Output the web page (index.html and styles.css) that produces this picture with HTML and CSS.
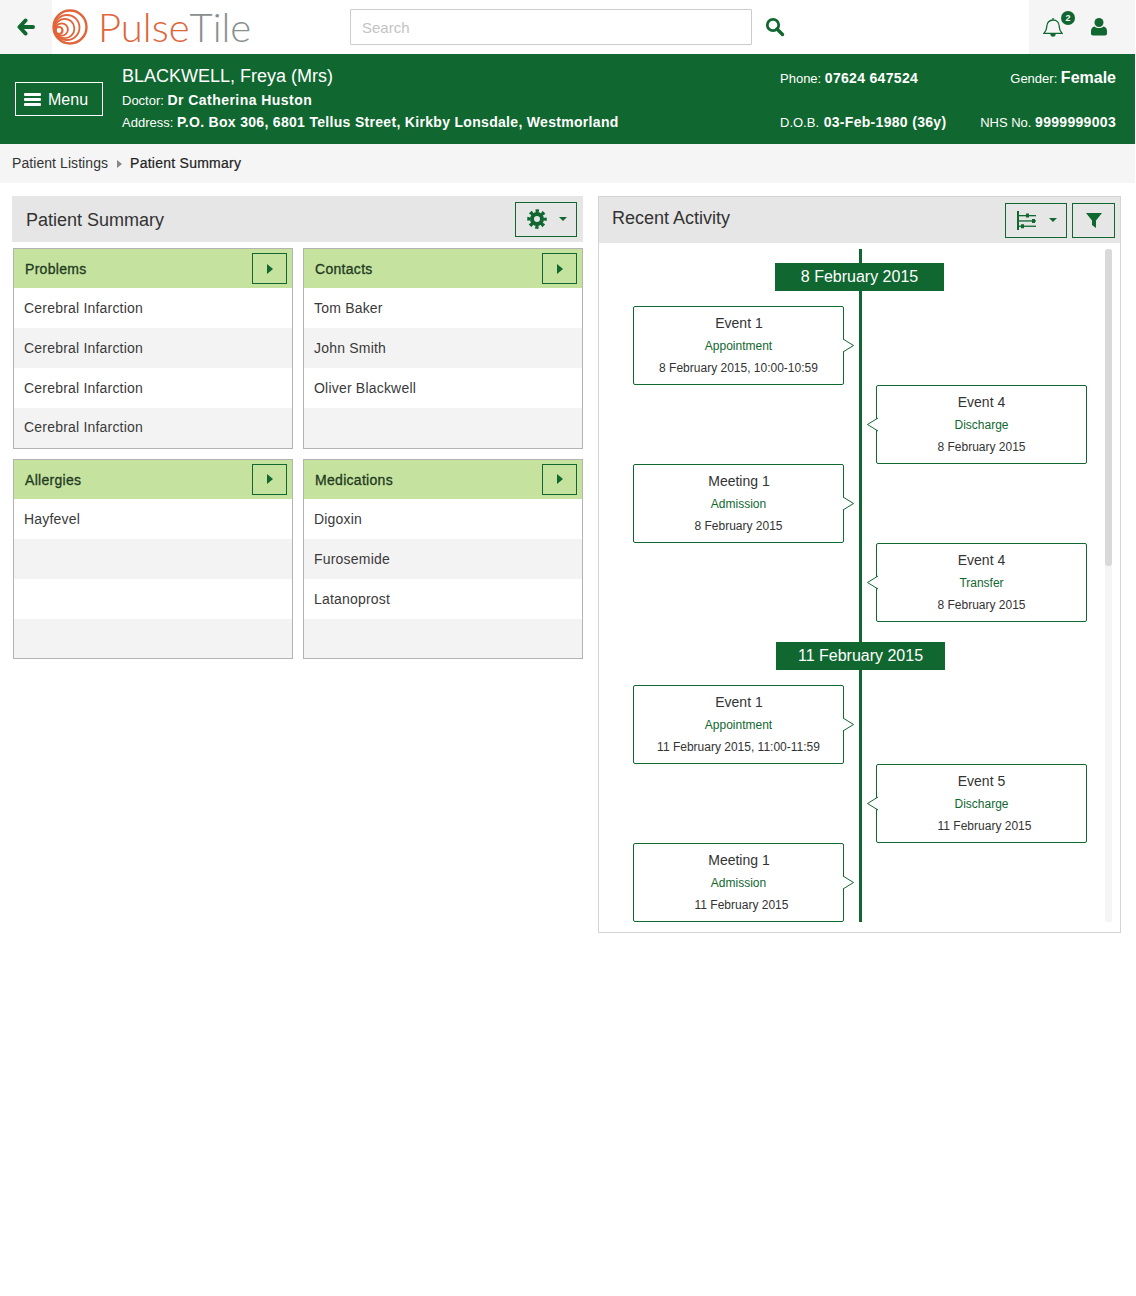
FILE: index.html
```html
<!DOCTYPE html>
<html lang="en">

<head>
    <meta charset="UTF-8">
    <meta name="viewport" content="width=device-width, initial-scale=1.0">
    <title>PulseTile - Patient Summary</title>
    <link rel="stylesheet" href="styles.css">
</head>

<body>
    <header class="topbar">
        <a class="back">
            <svg width="18" height="18" viewBox="0 0 18 18"><path d="M8.500 2.500 2.500 9l6 6.500M3.500 9H16" fill="none" stroke="#10672f" stroke-width="4" stroke-linejoin="round" stroke-linecap="round"/></svg>
        </a>
        <div class="logo">
            <svg width="36" height="36" viewBox="0 0 36 36" fill="none" stroke="#e0653a" stroke-width="1.800">
                <circle cx="18" cy="18" r="16.500" stroke-width="2.400"/>
                <circle cx="15" cy="18.500" r="12.500"/>
                <circle cx="12.700" cy="19.500" r="9.700"/>
                <circle cx="9.700" cy="20.500" r="6.200"/>
                <circle cx="7" cy="21.500" r="3.500" stroke-width="2.200"/>
            </svg>
            <span class="logo-pulse">Pulse</span><span class="logo-tile">Tile</span>
        </div>
        <div class="search">
            <input type="text" placeholder="Search">
            <svg width="20" height="20" viewBox="0 0 20 20" fill="none" stroke="#10672f"><circle cx="8" cy="8" r="5.700" stroke-width="2.800"/><path d="M12 12l5.500 5.500" stroke-width="3.400" stroke-linecap="round"/></svg>
        </div>
        <div class="user-tools">
            <div class="bell">
                <svg width="20" height="20" viewBox="0 0 20 20" fill="none" stroke="#10672f" stroke-width="1.300"><path d="M1 16.300c2-2 2.800-3.500 2.800-7C3.800 5.500 6.500 3 10 3s6.200 2.500 6.200 6.300c0 3.500.8 5 2.800 7zM10 1v2"/><path d="M8 17a2 2 0 0 0 4 0" fill="#10672f"/></svg>
                <span class="badge">2</span>
            </div>
            <svg width="16" height="18" viewBox="0 0 16 18" fill="#10672f"><circle cx="8" cy="4.500" r="4.500"/><path d="M3.500 8.500c1.200 1 2.800 1.500 4.500 1.500s3.300-.5 4.500-1.500c2 .3 3.500 2 3.500 4.500v2.500c0 1.200-.8 2-2 2H2c-1.200 0-2-.8-2-2V13c0-2.500 1.500-4.200 3.500-4.500z"/></svg>
        </div>
    </header>

    <section class="banner">
        <button class="menu-btn">
            <span class="bars"><i></i><i></i><i></i></span>
            Menu
        </button>
        <div class="patient">
            <div class="patient-name">BLACKWELL, Freya (Mrs)</div>
            <div class="patient-line">Doctor: <b class="doctor">Dr Catherina Huston</b></div>
            <div class="patient-line">Address: <b>P.O. Box 306, 6801 Tellus Street, Kirkby Lonsdale, Westmorland</b></div>
        </div>
        <div class="patient-side">
            <div class="side-row">
                <span>Phone: <b>07624 647524</b></span>
                <span>Gender: <b class="gender">Female</b></span>
            </div>
            <div class="side-row">
                <span>D.O.B. <b class="dob">03-Feb-1980 (36y)</b></span>
                <span>NHS No. <b>9999999003</b></span>
            </div>
        </div>
    </section>

    <nav class="crumbs">
        <span>Patient Listings</span>
        <i class="crumb-arrow"></i>
        <span class="current">Patient Summary</span>
    </nav>

    <main class="content">
        <section class="summary">
            <div class="summary-head">
                <h2>Patient Summary</h2>
                <button class="tool-btn gear-btn">
                    <svg width="20" height="20" viewBox="0 0 20 20" fill="none" stroke="#10672f"><circle cx="10" cy="10" r="5" stroke-width="4"/><circle cx="10" cy="10" r="8" stroke-width="3.500" stroke-dasharray="3.300 2.980" stroke-dashoffset="1.650"/></svg>
                    <i class="caret"></i>
                </button>
            </div>
            <div class="boxes">
                <div class="box">
                    <div class="box-head"><h3>Problems</h3><button class="go-btn"><i></i></button></div>
                    <div class="box-row">Cerebral Infarction</div>
                    <div class="box-row">Cerebral Infarction</div>
                    <div class="box-row">Cerebral Infarction</div>
                    <div class="box-row">Cerebral Infarction</div>
                </div>
                <div class="box">
                    <div class="box-head"><h3>Contacts</h3><button class="go-btn"><i></i></button></div>
                    <div class="box-row">Tom Baker</div>
                    <div class="box-row">John Smith</div>
                    <div class="box-row">Oliver Blackwell</div>
                    <div class="box-row"></div>
                </div>
                <div class="box">
                    <div class="box-head"><h3>Allergies</h3><button class="go-btn"><i></i></button></div>
                    <div class="box-row">Hayfevel</div>
                    <div class="box-row"></div>
                    <div class="box-row"></div>
                    <div class="box-row"></div>
                </div>
                <div class="box">
                    <div class="box-head"><h3>Medications</h3><button class="go-btn"><i></i></button></div>
                    <div class="box-row">Digoxin</div>
                    <div class="box-row">Furosemide</div>
                    <div class="box-row">Latanoprost</div>
                    <div class="box-row"></div>
                </div>
            </div>
        </section>

        <section class="activity">
            <div class="activity-head">
                <h2>Recent Activity</h2>
                <button class="tool-btn sort-btn">
                    <svg width="20" height="19" viewBox="0 0 20 19" fill="#10672f"><rect x="0" y="0" width="2" height="19"/><rect x="2" y="4" width="17" height="1.300"/><rect x="2" y="9.300" width="17" height="1.300"/><rect x="2" y="14.600" width="17" height="1.300"/><path d="M9 2.600h3v4H9zM15 8h3v4h-3zM4 13.200h3v4H4z"/></svg>
                    <i class="caret"></i>
                </button>
                <button class="tool-btn filter-btn">
                    <svg width="16" height="16" viewBox="0 0 16 16" fill="#10672f"><path d="M0 1h16L10 8.500V16L6 13V8.500z"/></svg>
                </button>
            </div>
            <div class="timeline">
                <div class="scroll-thumb"></div>
                <div class="date-label">8 February 2015</div>
                <div class="event left">
                    <h4>Event 1</h4><p class="kind">Appointment</p><p class="when">8 February 2015, 10:00-10:59</p>
                    <svg class="notch" width="11" height="15" viewBox="0 0 11 15"><path d="M0 1 10.500 7.500 0 14" fill="#fff" stroke="#10672f"/></svg>
                </div>
                <div class="event right">
                    <h4>Event 4</h4><p class="kind">Discharge</p><p class="when">8 February 2015</p>
                    <svg class="notch" width="11" height="15" viewBox="0 0 11 15"><path d="M11 1 .5 7.500 11 14" fill="#fff" stroke="#10672f"/></svg>
                </div>
                <div class="event left">
                    <h4>Meeting 1</h4><p class="kind">Admission</p><p class="when">8 February 2015</p>
                    <svg class="notch" width="11" height="15" viewBox="0 0 11 15"><path d="M0 1 10.500 7.500 0 14" fill="#fff" stroke="#10672f"/></svg>
                </div>
                <div class="event right">
                    <h4>Event 4</h4><p class="kind">Transfer</p><p class="when">8 February 2015</p>
                    <svg class="notch" width="11" height="15" viewBox="0 0 11 15"><path d="M11 1 .5 7.500 11 14" fill="#fff" stroke="#10672f"/></svg>
                </div>
                <div class="date-label second">11 February 2015</div>
                <div class="event left">
                    <h4>Event 1</h4><p class="kind">Appointment</p><p class="when">11 February 2015, 11:00-11:59</p>
                    <svg class="notch" width="11" height="15" viewBox="0 0 11 15"><path d="M0 1 10.500 7.500 0 14" fill="#fff" stroke="#10672f"/></svg>
                </div>
                <div class="event right">
                    <h4>Event 5</h4><p class="kind">Discharge</p><p class="when nudged">11 February 2015</p>
                    <svg class="notch" width="11" height="15" viewBox="0 0 11 15"><path d="M11 1 .5 7.500 11 14" fill="#fff" stroke="#10672f"/></svg>
                </div>
                <div class="event left">
                    <h4>Meeting 1</h4><p class="kind">Admission</p><p class="when nudged">11 February 2015</p>
                    <svg class="notch" width="11" height="15" viewBox="0 0 11 15"><path d="M0 1 10.500 7.500 0 14" fill="#fff" stroke="#10672f"/></svg>
                </div>
            </div>
        </section>
    </main>
</body>

</html>
```

FILE: styles.css
```css
* {
    margin: 0;
    padding: 0;
    box-sizing: border-box;
}

body {
    width: 1135px;
    min-height: 1296px;
    background: #fff;
    font-family: "Liberation Sans", Arial, sans-serif;
    color: #333;
}

button {
    font-family: inherit;
    background: none;
    cursor: pointer;
}

/* top bar */
.topbar {
    display: flex;
    align-items: stretch;
    height: 54px;
}

.back {
    display: flex;
    justify-content: center;
    align-items: center;
    width: 52px;
    background: #f5f5f5;
}

.logo {
    display: flex;
    align-items: center;
    width: 298px;
    font-family: Lato, sans-serif;
    font-weight: 300;
    font-size: 40px;
}

.logo svg {
    margin-right: 10px;
}

.logo-pulse {
    color: #e0653a;
}

.logo-tile {
    color: #8a8f8f;
}

.search {
    display: flex;
    align-items: center;
    gap: 13px;
}

.search input {
    width: 402px;
    height: 36px;
    padding: 0 11px;
    border: 1px solid #ccc;
    border-radius: 1px;
    font-family: inherit;
    font-size: 15px;
}

.search input::placeholder {
    color: #c4c4c4;
}

.user-tools {
    display: flex;
    align-items: center;
    gap: 28px;
    margin-left: auto;
    width: 106px;
    padding-left: 14px;
    background: #f5f5f5;
}

.bell {
    position: relative;
    height: 20px;
}

.badge {
    position: absolute;
    top: -6px;
    left: 18px;
    width: 14px;
    height: 14px;
    border-radius: 50%;
    background: #10672f;
    color: #fff;
    font-size: 9px;
    font-weight: bold;
    line-height: 14px;
    text-align: center;
}

/* patient banner */
.banner {
    display: flex;
    align-items: flex-start;
    height: 90px;
    background: #10672f;
    color: #fff;
    font-size: 13px;
}

.menu-btn {
    display: flex;
    align-items: center;
    gap: 7px;
    width: 88px;
    height: 34px;
    margin: 28px 19px 0 15px;
    padding: 2px 0 0 8px;
    border: 1px solid #fff;
    color: #fff;
    font-size: 16px;
}

.bars {
    margin-top: -2px;
}

.bars i {
    display: block;
    width: 17px;
    height: 3px;
    margin: 2px 0;
    background: #fff;
    border-radius: 1px;
}

.patient {
    width: 658px;
    padding-top: 12px;
}

.patient-name {
    font-size: 18px;
    line-height: 20px;
}

.patient-line {
    margin-top: 5px;
    line-height: 18px;
}

.patient-line + .patient-line {
    margin-top: 3px;
}

.patient b,
.patient-side b {
    font-size: 14px;
    letter-spacing: 0.31px;
}

.patient .doctor {
    letter-spacing: 0.45px;
}

.patient-side {
    display: flex;
    flex-direction: column;
    justify-content: space-between;
    width: 336px;
    height: 90px;
    padding: 15px 0 12px;
}

.side-row {
    display: flex;
    justify-content: space-between;
    line-height: 18px;
}

.patient-side .gender {
    font-size: 16px;
    letter-spacing: 0;
}

.patient-side .dob {
    margin-left: 1px;
}

/* breadcrumbs */
.crumbs {
    display: flex;
    align-items: center;
    height: 39px;
    padding: 0 0 2px 12px;
    background: #f5f5f5;
    font-size: 14px;
}

.crumb-arrow {
    width: 0;
    height: 0;
    margin: 2px 8px 0 9px;
    border-left: 5px solid #888;
    border-top: 4px solid transparent;
    border-bottom: 4px solid transparent;
}

.crumbs span:first-child {
    letter-spacing: 0.07px;
}

.crumbs .current {
    color: #222;
    letter-spacing: 0.25px;
    -webkit-text-stroke: 0.2px #222;
}

/* main area */
.content {
    display: flex;
    align-items: flex-start;
    gap: 15px;
    padding: 13px 0 0 12px;
}

.summary {
    width: 571px;
}

.summary-head {
    display: flex;
    justify-content: space-between;
    align-items: center;
    height: 46px;
    padding: 0 6px 0 14px;
    background: #e6e6e6;
}

.summary-head h2,
.activity-head h2 {
    font-size: 18px;
    font-weight: normal;
    color: #333;
}

.summary-head h2 {
    padding-top: 2px;
}

.tool-btn {
    display: flex;
    justify-content: center;
    align-items: center;
    height: 35px;
    border: 1px solid #10672f;
}

.gear-btn,
.sort-btn {
    gap: 12px;
    width: 62px;
    padding-left: 2px;
}

.filter-btn {
    width: 43px;
    margin-left: 5px;
}

.caret {
    width: 0;
    height: 0;
    border-top: 4px solid #10672f;
    border-left: 4px solid transparent;
    border-right: 4px solid transparent;
}

.boxes {
    display: grid;
    grid-template-columns: 280px 280px;
    gap: 10px;
    margin: 6px 0 0 1px;
}

.box {
    border: 1px solid #b3b3b3;
}

.box-head {
    display: flex;
    justify-content: space-between;
    align-items: center;
    height: 39px;
    padding: 0 5px 0 11px;
    background: #c5e29e;
}

.box-head h3 {
    font-size: 14px;
    font-weight: normal;
    letter-spacing: 0.3px;
    color: #1f3a22;
    -webkit-text-stroke: 0.3px #1f3a22;
}

.box:nth-child(n+3) h3 {
    padding-top: 2px;
}

.go-btn {
    display: flex;
    justify-content: center;
    align-items: center;
    width: 35px;
    height: 31px;
    border: 1px solid #10672f;
}

.go-btn i {
    width: 0;
    height: 0;
    border-left: 6px solid #10672f;
    border-top: 5px solid transparent;
    border-bottom: 5px solid transparent;
}

.box-row {
    height: 40px;
    padding: 0 10px;
    font-size: 14px;
    line-height: 40px;
    letter-spacing: 0.2px;
    color: #3a3a3a;
}

.box-row:nth-child(odd) {
    background: #f3f3f3;
}

.box-row:last-child {
    height: 39.500px;
    line-height: 38px;
}

/* recent activity */
.activity {
    width: 523px;
    height: 737px;
    border: 1px solid #d4d4d4;
}

.activity-head {
    display: flex;
    align-items: center;
    height: 46px;
    padding: 0 5px 0 13px;
    background: #e6e6e6;
}

.activity-head h2 {
    margin-right: auto;
    margin-top: -4px;
}

.timeline {
    position: relative;
    height: 673px;
    margin-top: 6px;
    padding-top: 14px;
    overflow: hidden;
}

.timeline::before {
    content: "";
    position: absolute;
    top: 0;
    bottom: 0;
    left: 260px;
    width: 3px;
    background: #10672f;
}

.timeline::after {
    content: "";
    position: absolute;
    top: 0;
    bottom: -1px;
    left: 506px;
    width: 7px;
    border-radius: 3px;
    background: #f5f5f5;
}

.scroll-thumb {
    position: absolute;
    z-index: 1;
    top: 0;
    left: 506px;
    width: 7px;
    height: 317px;
    border-radius: 3px;
    background: #d9d9d9;
}

.date-label {
    position: relative;
    width: 169px;
    height: 28px;
    margin: 0 0 15px 176px;
    background: #10672f;
    color: #fff;
    font-size: 16px;
    line-height: 27px;
    text-align: center;
}

.date-label.second {
    margin: 20px 0 15px 177px;
}

.event {
    position: relative;
    width: 211px;
    height: 79px;
    padding-top: 7px;
    border: 1px solid #10672f;
    border-radius: 2px;
    background: #fff;
    text-align: center;
}

.event.left {
    margin-left: 34px;
}

.event.right {
    margin-left: 277px;
}

.event h4 {
    font-size: 14px;
    font-weight: normal;
    line-height: 18px;
    color: #333;
}

.left h4 {
    padding-left: 1px;
}

.event .kind {
    margin-top: 6px;
    font-size: 12px;
    line-height: 16px;
    color: #10672f;
}

.event .when {
    margin-top: 6px;
    font-size: 12px;
    line-height: 16px;
    color: #333;
}

.event .when.nudged {
    padding-left: 6px;
}

.notch {
    position: absolute;
    top: 31px;
}

.left .notch {
    left: 209px;
}

.right .notch {
    left: -10px;
}
```
